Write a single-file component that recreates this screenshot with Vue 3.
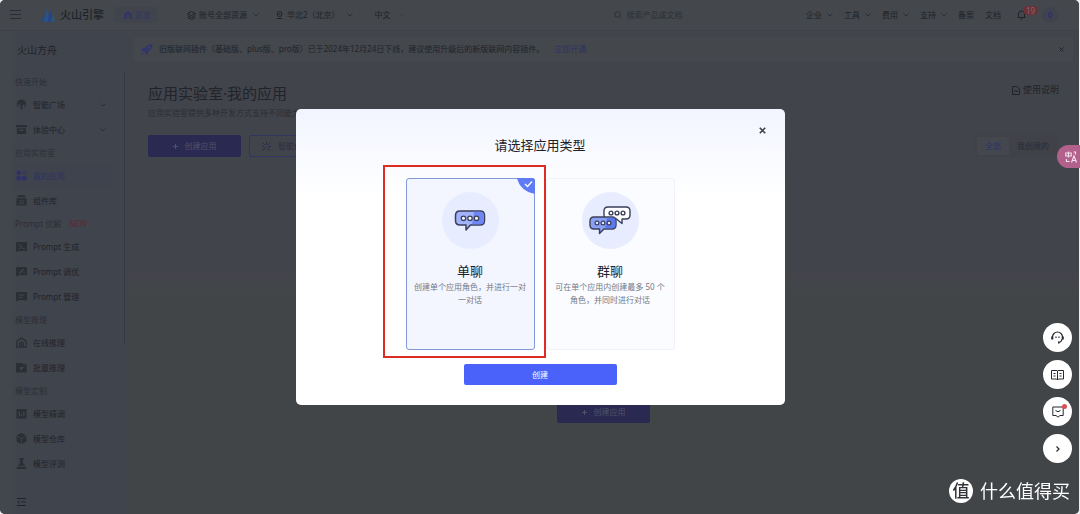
<script setup>
const navMenus = ['企业', '工具', '费用', '支持']
const groups = [
  { title: '快速开始', items: [
    { name: '智能广场', icon: 'bulb', more: true },
    { name: '体验中心', icon: 'box', more: true }
  ] },
  { title: '应用实验室', items: [
    { name: '我的应用', icon: 'apps', active: true },
    { name: '组件库', icon: 'stack' }
  ] },
  { title: 'Prompt 优解', tag: 'NEW', items: [
    { name: 'Prompt 生成', icon: 'term' },
    { name: 'Prompt 调优', icon: 'tune' },
    { name: 'Prompt 管理', icon: 'manage' }
  ] },
  { title: '模型推理', items: [
    { name: '在线推理', icon: 'online' },
    { name: '批量推理', icon: 'batch' }
  ] },
  { title: '模型定制', items: [
    { name: '模型精调', icon: 'fine' },
    { name: '模型仓库', icon: 'cube' },
    { name: '模型评测', icon: 'flask' }
  ] }
]
const icons = {
  bulb: '<path fill="currentColor" fill-rule="evenodd" d="M6 .5a5 5 0 0 0-3 9V8L1.8 6.500 3.500 5.500 5 7v4.500h2V7l1.500-1.500 1.700 1L9 8v1.500A5 5 0 0 0 6 .5z"/>',
  box: '<path fill="currentColor" fill-rule="evenodd" d="M0 1h12v2.500H0zM1 4.500h10V11H1zM4 6v1.500h4V6z"/>',
  apps: '<circle cx="3" cy="3" r="2.500" fill="currentColor"/><circle cx="9" cy="3" r="2.500" fill="currentColor" opacity=".4"/><circle cx="3" cy="9" r="2.700" fill="currentColor"/><circle cx="9" cy="9" r="2.700" fill="currentColor"/>',
  stack: '<path fill="currentColor" fill-rule="evenodd" d="M3 0h6l2 2.500H1zM.5 3.500h11V11.500H.5zM3 6h6v1H3zM3 8.500h6v1H3z"/>',
  term: '<path fill="currentColor" fill-rule="evenodd" d="M1 1h11v10H3l-3 1V2zM3 3.500 5.500 6 3 8.500l.8.700L7 6 3.800 2.800zM7 8h3v1H7z"/>',
  tune: '<path fill="currentColor" fill-rule="evenodd" d="M1 1h11v9H3l-3 1.500V2zM3 7.500 8 3l1 1-4.500 4.500zM8 7h2v1H8z"/>',
  manage: '<path fill="currentColor" fill-rule="evenodd" d="M1 1h11v9H3l-3 1.500V2zM3 3.800h6v1H3zM3 6.500h4v1H3z"/>',
  online: '<path fill="none" stroke="currentColor" stroke-width="1.500" d="M1 4.500 6 1l5 3.500V11H1zM4 5.500V11M6 4v7M8 5.500V11"/>',
  batch: '<path fill="currentColor" fill-rule="evenodd" d="M0 1h7l1 1.500h3.500V11.500H0zM3 6.500l2 1 .8 2L9 4.500z"/>',
  fine: '<path fill="currentColor" fill-rule="evenodd" d="M.5 1h11v10.500H.5zM3 4v5h1.300V4zM5.500 6v3h1.200V6zM8 3.500V9h1.200V3.500z"/>',
  cube: '<path fill="currentColor" d="M6 0l5.200 2.800L6 5.600.8 2.800zM.6 3.600l5 2.700V12L.6 9.200zM11.400 3.600l-5 2.700V12l5-2.800z"/>',
  flask: '<path fill="currentColor" fill-rule="evenodd" d="M3.500 0h5v1.500h-1V5L10 8.500H2L4.500 5V1.500h-1zM1.500 9.500h9l1 2.500H.5z"/>'
}
const types = [
  { id: 'single', name: '单聊', desc: '创建单个应用角色，并进行一对一对话' },
  { id: 'group', name: '群聊', desc: '可在单个应用内创建最多 50 个角色，并同时进行对话' }
]
</script>

<template>
  <div class="page">
    <header class="topbar">
      <button class="plain burger" aria-label="菜单">
        <svg width="11" height="10" viewBox="0 0 11 10"><path d="M0 .5h11M0 4.500h11M0 8.500h11" stroke="currentColor" /></svg>
      </button>
      <a href="#" class="brand">
        <svg width="14" height="14" viewBox="0 0 14 14">
          <path d="M0 14 2.500 5l2.500 9z" fill="#2c4a78" /><path d="M3 14 6 0l3.500 14z" fill="#2a5188" />
          <path d="M6.500 14 9.500 1l2.500 13z" fill="#264582" /><path d="M9.500 14 12 6l2 8z" fill="#2c5678" />
        </svg>
        <span>火山引擎</span>
      </a>
      <a href="#" class="overview">
        <svg width="8" height="8" viewBox="0 0 8 8"><path d="M4 0l3.700 3v5H5.300V5a1.300 1.300 0 0 0-2.600 0v3H.3V3z" fill="currentColor" /></svg>
        总览
      </a>
      <button class="plain account">
        <svg width="9" height="9" viewBox="0 0 9 9" fill="none" stroke="currentColor"><path d="M4.500.5l4 2-4 2-4-2zM.5 4.500l4 2 4-2M.5 6.500l4 2 4-2" /></svg>
        账号全部资源
        <svg class="chev" width="6" height="4" viewBox="0 0 6 4"><path d="M.5.5 3 3 5.500.5" /></svg>
      </button>
      <button class="plain region">
        <svg width="7" height="8" viewBox="0 0 7 8" fill="none" stroke="currentColor"><circle cx="3.500" cy="3" r="2.500" /><circle cx="3.500" cy="3" r=".5" /><path d="M1 7.500h5" /></svg>
        华北2（北京）
        <svg class="chev" width="6" height="4" viewBox="0 0 6 4"><path d="M.5.5 3 3 5.500.5" /></svg>
      </button>
      <button class="plain lang">
        中文
        <svg class="chev faint" width="6" height="4" viewBox="0 0 6 4"><path d="M.5.5 3 3 5.500.5" /></svg>
      </button>
      <label class="search">
        <svg width="8" height="8" viewBox="0 0 8 8" fill="none" stroke="currentColor"><circle cx="3.500" cy="3.500" r="2.800" /><path d="M5.500 5.500 7.500 7.500" /></svg>
        <input type="search" aria-label="搜索" placeholder="搜索产品或文档" />
      </label>
      <nav class="links">
        <button v-for="m in navMenus" :key="m" class="plain menu">
          {{ m }}
          <svg class="chev" width="6" height="4" viewBox="0 0 6 4"><path d="M.5.5 3 3 5.500.5" /></svg>
        </button>
        <a href="#">备案</a>
        <a href="#">文档</a>
      </nav>
      <button class="plain bell" aria-label="消息">
        <svg width="9" height="10" viewBox="0 0 9 10" fill="none" stroke="currentColor"><path d="M.5 7.500h8M1.500 7.500V4a3 3 0 0 1 6 0v3.500M3.500 9h2" /></svg>
        <span class="count">19</span>
      </button>
      <button class="avatar" aria-label="账户">0</button>
    </header>

    <div class="body">
      <aside class="sidebar">
        <h2>火山方舟</h2>
        <nav>
          <section v-for="g in groups" :key="g.title">
            <h3>{{ g.title }}<em v-if="g.tag">{{ g.tag }}</em></h3>
            <a v-for="i in g.items" :key="i.name" href="#" class="item" :class="{ active: i.active }">
              <svg width="11" height="11" viewBox="0 0 12 12" v-html="icons[i.icon]"></svg>
              <span>{{ i.name }}</span>
              <svg v-if="i.more" class="chev" width="6" height="4" viewBox="0 0 6 4"><path d="M.5.5 3 3 5.500.5" /></svg>
            </a>
          </section>
        </nav>
        <button class="plain fold" aria-label="收起">
          <svg width="9" height="8" viewBox="0 0 9 8" stroke="currentColor" fill="none"><path d="M0 .5h9M4 4h5M0 7.500h9M2.500 2.500 1 4l1.500 1.500" /></svg>
        </button>
      </aside>

      <main>
        <div class="notice">
          <svg width="12" height="11" viewBox="0 0 12 11"><path d="M11.500 0C8 0 5.500 1.500 4 4L1 4.500 0 6.500l2.500.5L4.500 9l.5 2 2-1 .5-3C10 5.500 11.500 3.500 11.500 0zM1 8.500 0 11l2.500-1z" fill="#33366b" /><circle cx="8" cy="3.500" r="1" fill="#45484e" /></svg>
          <p>旧版联网插件（基础版、plus版、pro版）已于2024年12月24日下线，建议使用升级后的新版联网内容插件。 <a href="#">立即开通</a></p>
          <button class="plain" aria-label="关闭">
            <svg width="5" height="5" viewBox="0 0 5 5" stroke="currentColor"><path d="M.5.5l4 4M4.500.5l-4 4" /></svg>
          </button>
        </div>
        <div class="heading">
          <div>
            <h1>应用实验室·我的应用</h1>
            <p>应用实验室提供多种开发方式支持不同能力</p>
          </div>
          <a href="#" class="manual">
            <svg width="8" height="9" viewBox="0 0 8 9" fill="none" stroke="currentColor"><path d="M.5.500H5l2.500 2.500v5.500h-7zM2 6l1.500-2L5 6l1-1.500" /></svg>
            使用说明
          </a>
        </div>
        <div class="tools">
          <button class="create"><svg width="5" height="5" viewBox="0 0 5 5" stroke="currentColor"><path d="M0 2.500h5M2.500 0v5" /></svg>创建应用</button>
          <button class="create outline"><svg width="9" height="9" viewBox="0 0 9 9" stroke="currentColor"><path d="M0 9l4-4M4.500 0v3M9 4.500H6M1 1l2 2M8 1 6 3M5.500 6 8 8.500M0 4.500h2" /></svg>智能创建</button>
          <div class="tabs">
            <button class="on">全部</button>
            <button>我创建的</button>
          </div>
        </div>
        <div class="empty">
          <button class="create"><svg width="5" height="5" viewBox="0 0 5 5" stroke="currentColor"><path d="M0 2.500h5M2.500 0v5" /></svg>创建应用</button>
        </div>
      </main>
    </div>

    <div class="overlay">
      <div class="dialog" role="dialog" aria-labelledby="dialog-title">
        <button class="plain close" aria-label="关闭">
          <svg width="7" height="7" viewBox="0 0 7 7" stroke="currentColor" stroke-width="1.600"><path d="M.8.800l5.400 5.400M6.200.800.800 6.200" /></svg>
        </button>
        <h2 id="dialog-title">请选择应用类型</h2>
        <div class="cards">
          <button v-for="t in types" :key="t.id" class="card" :class="t.id">
            <span class="disc">
              <svg v-if="t.id === 'single'" width="32" height="24" viewBox="0 0 32 24" stroke="#3a3f5c" stroke-width="1.500" stroke-linejoin="round">
                <path d="M6 2h20q4.500 0 4.500 4.500v5q0 4.500-4.500 4.500h-9.500L12 21v-5H6q-4.500 0-4.500-4.500v-5Q1.500 2 6 2z" fill="#a3b3fb" />
                <path d="M20 2.700h6q3.800 0 3.800 3.800v5q0 3.800-3.800 3.800h-8z" fill="#6f87f5" stroke="none" />
                <g fill="#fff" stroke-width="1.300"><circle cx="9.500" cy="9.300" r="2.200" /><circle cx="16" cy="9.300" r="2.200" /><circle cx="22.500" cy="9.300" r="2.200" /></g>
              </svg>
              <svg v-else width="44" height="32" viewBox="0 0 44 32" stroke="#3a3f5c" stroke-width="1.400" stroke-linejoin="round">
                <path d="M20 2h18q4 0 4 4v4q0 4-4 4h-4v4.500L28.500 14H20q-4 0-4-4V6q0-4 4-4z" fill="#fff" />
                <g fill="#fff"><circle cx="23" cy="8" r="1.900" /><circle cx="29" cy="8" r="1.900" /><circle cx="35" cy="8" r="1.900" /></g>
                <path d="M6 12h18q4 0 4 4v4q0 4-4 4h-8l-4.500 4.500V24H6q-4 0-4-4v-4q0-4 4-4z" fill="#8aa0f5" />
                <path d="M19 12.700h5q3.300 0 3.300 3.300v4q0 3.300-3.300 3.300h-7z" fill="#5b78ed" stroke="none" />
                <g fill="#dfe5ff" stroke-width="1.200"><circle cx="9" cy="18" r="1.900" /><circle cx="15" cy="18" r="1.900" /><circle cx="21" cy="18" r="1.900" /></g>
              </svg>
            </span>
            <strong>{{ t.name }}</strong>
            <span class="desc">{{ t.desc }}</span>
            <svg v-if="t.id === 'single'" class="check" width="18" height="16" viewBox="0 0 18 16"><path d="M0 0h15q3 0 3 3v13Q3 13 0 0z" fill="#5f7cf5" /><path d="M8 6l2.500 2.500L15 3.500" fill="none" stroke="#fff" stroke-width="1.300" /></svg>
          </button>
          <div class="marker"></div>
        </div>
        <button class="submit">创建</button>
      </div>
    </div>

    <button class="translate" aria-label="翻译">
      <svg width="13" height="12" viewBox="0 0 13 12" fill="none" stroke="currentColor" stroke-width="1.200"><path d="M.8 2h5.400v3H.8zM3.500.5v6M8.500 1h2v2.500M1.500 8v2.500h3M6.500 11.500 9 5l2.500 6.500M7.500 9.500h3" /></svg>
    </button>
    <div class="floats">
      <button aria-label="客服">
        <svg width="13" height="13" viewBox="0 0 13 13" fill="none" stroke="currentColor" stroke-width="1.200"><path d="M1.500 8V6a5 5 0 0 1 10 0v2M11 8q-.5 3.500-4 3.500" /><path d="M1.200 5.500v3M11.800 5.500v3M7 11.500h1.500" stroke-width="2" /><path d="M5 5.500V7M8 5.500V7" /></svg>
      </button>
      <button aria-label="文档">
        <svg width="13" height="12" viewBox="0 0 13 12" fill="none" stroke="currentColor"><path d="M.5 1.500H6l.5.500.5-.5h5.500v8.500H7.500l-1 1-1-1h-5zM6.500 2v9M2.500 4.500h2M2.500 7h2M8.500 4.500h2M8.500 7h2" /></svg>
      </button>
      <button class="feedback" aria-label="反馈">
        <svg width="12" height="12" viewBox="0 0 12 12" fill="none" stroke="currentColor"><path d="M.8 1h10.400v8.500H8l-2 1.700-2-1.700H.8zM3.500 4.500q2.500 2.500 5 0" /></svg>
      </button>
      <button aria-label="收起">
        <svg width="6" height="8" viewBox="0 0 6 8" fill="none" stroke="currentColor" stroke-width="1.200"><path d="M1.500 1.500 4 4 1.500 6.500" /></svg>
      </button>
    </div>
    <div class="watermark"><b>值</b><span>什么值得买</span></div>
  </div>
</template>

<style>
body { margin: 0; background: #eceef2; }
</style>

<style scoped>
* { box-sizing: border-box; }
.page {
  position: relative;
  display: flex;
  flex-direction: column;
  min-height: 100vh;
  margin-right: 1px;
  border-radius: 5px;
  overflow: hidden;
  background: #42454a;
  color: #202329;
  font: 8px/12px "Noto Sans", "Noto Sans CJK SC", sans-serif;
}
h1, h2, h3, p { margin: 0; font-weight: 400; }
a { color: inherit; text-decoration: none; }
button { font: inherit; color: inherit; border: 0; padding: 0; margin: 0; cursor: pointer; }
.plain { background: none; display: flex; align-items: center; }
svg { flex: none; display: block; }
.chev { fill: none; stroke: currentColor; opacity: .7; }
.faint { opacity: .2; }

.topbar {
  display: flex;
  align-items: center;
  height: 31px;
  padding: 0 21px 0 10px;
  background: #44474b;
  border-bottom: 1px solid #3e4146;
}
.burger { color: #2a2d33; }
.brand { display: flex; align-items: center; gap: 5px; margin-left: 20px; font-size: 11px; font-weight: 500; }
.overview {
  display: flex;
  align-items: center;
  gap: 3px;
  margin-left: 10px;
  padding: 2px 7px 2px 10px;
  border-radius: 2px;
  background: #41444c;
  color: #303468;
}
.account { gap: 3px; margin-left: 29px; }
.region { gap: 4px; margin-left: 17px; }
.lang { gap: 8px; margin-left: 22px; }
.account .chev, .region .chev { margin-left: 3px; }
.search { display: flex; flex: 1; align-items: center; gap: 5px; padding-left: 209px; color: #2d3035; }
.search input {
  flex: 1;
  min-width: 60px;
  width: 60px;
  padding: 0;
  border: 0;
  outline: 0;
  background: none;
  font: inherit;
}
.search input::placeholder { color: #2d3035; opacity: 1; }
.links { display: flex; align-items: center; gap: 11px; }
.menu { gap: 5px; }
.bell { position: relative; margin-left: 16px; }
.count {
  position: absolute;
  left: 6px;
  top: -4px;
  padding: 0 3px;
  border-radius: 5px;
  background: #6b3039;
  color: #85686d;
  font-size: 8px;
  line-height: 9px;
}
.avatar { width: 16px; height: 16px; margin-left: 16px; border-radius: 8px; background: #40434d; color: #292c72; font-weight: 600; }

.body { display: flex; flex: 1; }
.sidebar {
  position: relative;
  display: flex;
  flex-direction: column;
  width: 128px;
  padding: 12px 15px 8px 15px;
  background: linear-gradient(90deg, #43474d 12px, #40444c 12px);
}
.sidebar::after { content: ""; position: absolute; left: 124px; top: 41px; width: 1px; height: 273px; background: #36393f; }
.sidebar h2 { padding-left: 2px; margin-bottom: 13px; font-size: 10px; line-height: 15px; }
.sidebar h3 { font-size: 8px; line-height: 21px; color: #2c2f36; }
.sidebar em { margin-left: 8px; font-size: 8px; font-style: normal; color: #582d37; }
.item { display: flex; align-items: center; gap: 6px; height: 25px; padding-left: 1px; }
.item .chev { margin-left: auto; margin-right: 7px; }
.item > svg:first-child { color: #2a2e35; }
.item.active, .item.active > svg:first-child { color: #2d3165; }
.item.active { background: #3f434d; }
.fold { margin-top: auto; padding-left: 2px; }

main {
  display: flex;
  flex: 1;
  flex-direction: column;
  min-width: 0;
  padding: 6px 6px 0;
  background: linear-gradient(#42444b, #42444b 240px, #424548 260px);
}
.notice { display: flex; align-items: center; gap: 6px; height: 24px; padding: 0 9px 0 7px; border-radius: 2px; background: #44474c; }
.notice p { flex: 1; }
.notice p a { margin-left: 8px; color: #2e316a; }
.heading { display: flex; justify-content: space-between; align-items: flex-start; padding: 22px 14px 0; }
h1 { font-size: 15px; line-height: 20px; }
.heading p { padding-top: 4px; height: 32px; color: #2a2d34; line-height: 12px; }
.manual { display: flex; align-items: center; gap: 3px; font-size: 9px; line-height: 14px; }
.tools { display: flex; gap: 8px; padding: 0 14px; }
.create {
  display: flex;
  align-items: center;
  justify-content: center;
  gap: 7px;
  width: 93px;
  height: 22px;
  border-radius: 2px;
  background: #2a2951;
  color: #515268;
}
.create.outline { justify-content: flex-start; padding-left: 12px; border: 1px solid #303563; background: none; color: #2a2d45; }
.tabs { display: flex; margin-left: auto; padding: 2px; background: #404248; border-radius: 2px; }
.tabs button { padding: 0 8px; background: none; color: #292c33; }
.tabs .on { background: #44484e; color: #2e3267; }
.empty { display: flex; flex: 1; justify-content: center; align-items: flex-end; padding-bottom: 91px; }

.overlay { position: fixed; inset: 0; display: flex; align-items: center; justify-content: center; }
.dialog {
  position: relative;
  display: flex;
  flex-direction: column;
  align-items: center;
  width: 489px;
  padding: 27px 0 20px;
  border-radius: 5px;
  background: linear-gradient(#f2f5ff, #fff 90px);
  color: #1d2129;
}
.dialog h2 { font-size: 13px; line-height: 18px; }
.close { position: absolute; right: 19px; top: 18px; color: #3c404c; }
.cards { position: relative; display: flex; gap: 11px; margin: 24px 0 14px; }
.card {
  position: relative;
  display: flex;
  flex-direction: column;
  align-items: center;
  width: 129px;
  height: 172px;
  padding: 13px 6px 0;
  border: 1px solid #eff2f8;
  border-radius: 3px;
  background: #fafcff;
}
.single { border-color: #8398dc; background: #f3f6ff; }
.disc { display: flex; align-items: center; justify-content: center; width: 57px; height: 57px; border-radius: 50%; background: #e7edff; }
.card strong { margin-top: 13px; font-size: 13px; line-height: 18px; font-weight: 400; }
.desc { line-height: 13px; color: #737884; }
.check { position: absolute; top: -1px; right: -1px; }
.marker { position: absolute; left: -23px; top: -13px; width: 163px; height: 193px; border: 2px solid #dc2d24; pointer-events: none; }
.submit { width: 153px; height: 21px; border-radius: 2px; background: #4b62fa; color: #fff; }

.translate {
  position: fixed;
  right: 0;
  top: 145px;
  display: flex;
  align-items: center;
  width: 23px;
  height: 23px;
  padding-left: 8px;
  border-radius: 12px 0 0 12px;
  background: #b2608c;
  color: #f2dfe9;
}
.floats { position: fixed; right: 8px; top: 323px; display: flex; flex-direction: column; gap: 8px; }
.floats button { position: relative; display: flex; align-items: center; justify-content: center; width: 29px; height: 29px; border-radius: 50%; background: #fff; color: #25282e; }
.feedback::after { content: ""; position: absolute; right: 5px; top: 7px; width: 5px; height: 5px; border-radius: 50%; background: #dd4f55; }
.watermark { position: fixed; right: 10px; bottom: 11px; display: flex; align-items: center; gap: 7px; color: #fff; font-size: 18px; line-height: 24px; }
.watermark b { width: 24px; height: 24px; border-radius: 50%; background: #fff; color: #303338; font-size: 17px; font-weight: 500; text-align: center; }
</style>
